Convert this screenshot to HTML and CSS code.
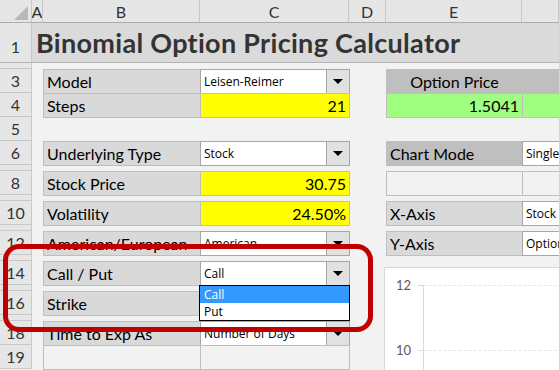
FILE: index.html
```html
<!DOCTYPE html>
<html lang="en">

<head>
  <meta charset="UTF-8" />
  <title>Binomial Option Pricing Calculator</title>
  <link rel="stylesheet" href="styles.css">
</head>

<body>
  <div class="sheet">
    <div class="row head">
      <div class="ch corner">
        <svg width="31" height="22" viewBox="0 0 31 22"><polygon points="14,20 28,20 28,6" fill="#b8b8b8" /></svg>
      </div>
      <div class="ch">A</div>
      <div class="ch">B</div>
      <div class="ch">C</div>
      <div class="ch">D</div>
      <div class="ch">E</div>
      <div class="ch"></div>
    </div>

    <div class="row title">
      <div class="rh">1</div>
      <div class="title-cell">Binomial Option Pricing Calculator</div>
    </div>
    <div class="row gap"><div class="rh"></div></div>

    <div class="row">
      <div class="rh">3</div><div></div>
      <div class="box label">Model</div>
      <div class="box combo"><span>Leisen-Reimer</span><i class="dd"></i></div>
      <div></div>
      <div class="box dark center">Option Price</div>
      <div class="box dark"></div>
    </div>
    <div class="row">
      <div class="rh">4</div><div></div>
      <div class="box label">Steps</div>
      <div class="box input">21</div>
      <div></div>
      <div class="box result">1.5041</div>
      <div class="box result"></div>
    </div>
    <div class="row">
      <div class="rh">5</div>
    </div>
    <div class="row">
      <div class="rh">6</div><div></div>
      <div class="box label">Underlying Type</div>
      <div class="box combo"><span>Stock</span><i class="dd"></i></div>
      <div></div>
      <div class="box dark">Chart Mode</div>
      <div class="box combo"><span>Single Variable</span></div>
    </div>
    <div class="row gap"><div class="rh"></div></div>

    <div class="row">
      <div class="rh">8</div><div></div>
      <div class="box label">Stock Price</div>
      <div class="box input">30.75</div>
      <div></div>
      <div class="box"></div>
      <div class="box"></div>
    </div>
    <div class="row gap"><div class="rh"></div></div>

    <div class="row">
      <div class="rh">10</div><div></div>
      <div class="box label">Volatility</div>
      <div class="box input">24.50%</div>
      <div></div>
      <div class="box label">X-Axis</div>
      <div class="box combo"><span>Stock Price</span></div>
    </div>
    <div class="row gap"><div class="rh"></div></div>

    <div class="row">
      <div class="rh">12</div><div></div>
      <div class="box label">American/European</div>
      <div class="box combo"><span>American</span><i class="dd"></i></div>
      <div></div>
      <div class="box label">Y-Axis</div>
      <div class="box combo"><span>Option Price</span></div>
    </div>
    <div class="row gap"><div class="rh"></div></div>

    <div class="row">
      <div class="rh">14</div><div></div>
      <div class="box label">Call / Put</div>
      <div class="box combo"><span>Call</span><i class="dd"></i></div>
    </div>
    <div class="row gap"><div class="rh"></div></div>

    <div class="row">
      <div class="rh">16</div><div></div>
      <div class="box label">Strike</div>
      <div class="box input">30.00</div>
    </div>
    <div class="row gap"><div class="rh"></div></div>

    <div class="row">
      <div class="rh">18</div><div></div>
      <div class="box label">Time to Exp As</div>
      <div class="box combo"><span>Number of Days</span><i class="dd"></i></div>
    </div>
    <div class="row">
      <div class="rh">19</div><div></div>
      <div class="box"></div>
      <div class="box"></div>
    </div>

    <!-- floating objects -->
    <div class="chart">
      <svg width="200" height="110" viewBox="0 0 200 110">
        <line x1="38.5" y1="17.5" x2="200" y2="17.5" stroke="#e4e4e4" stroke-dasharray="3 2" />
        <line x1="38.5" y1="82.5" x2="200" y2="82.5" stroke="#e4e4e4" stroke-dasharray="3 2" />
        <line x1="33" y1="17.5" x2="38.5" y2="17.5" stroke="#d9d9d9" />
        <line x1="33" y1="82.5" x2="38.5" y2="82.5" stroke="#d9d9d9" />
        <line x1="38.5" y1="17" x2="38.5" y2="110" stroke="#d9d9d9" />
        <text x="26" y="22" text-anchor="end" class="tick">12</text>
        <text x="26" y="87" text-anchor="end" class="tick">10</text>
      </svg>
    </div>

    <div class="list">
      <div class="opt sel">Call</div>
      <div class="opt">Put</div>
    </div>

    <div class="mark"></div>
  </div>
</body>

</html>
```

FILE: styles.css
```css
* {
  box-sizing: border-box;
  margin: 0;
  padding: 0;
}

body {
  background: #f2f2f2;
  font-family: Lato, 'Liberation Sans', sans-serif;
  font-size: 16px;
  color: #000;
  overflow: hidden;
}

.sheet {
  position: relative;
  width: 559px;
  height: 370px;
  overflow: hidden;
}

.row {
  display: grid;
  grid-template-columns: 32px 11px 157px 149px 37px 136px 1fr;
  height: 24px;
}

.row.head {
  height: 23px;
}

.row.title {
  height: 40px;
}

.row.gap {
  height: 6px;
}

/* headers */
.ch {
  background: #e6e6e6;
  border-right: 1px solid #c8c8c8;
  border-bottom: 1px solid #ababab;
  color: #333;
  display: flex;
  align-items: center;
  justify-content: center;
  overflow: hidden;
}

.ch.corner {
  align-items: flex-start;
  justify-content: flex-start;
}

.rh {
  background: #e6e6e6;
  border-right: 1px solid #c8c8c8;
  border-bottom: 1px solid #c8c8c8;
  color: #333;
  display: flex;
  align-items: center;
  justify-content: center;
}

.title .rh {
  align-items: flex-end;
  padding-bottom: 6px;
  border-bottom-color: #b4b4b4;
}

.title-cell {
  grid-column: 2 / -1;
  background: #dadada;
  border-bottom: 1px solid #b4b4b4;
  display: flex;
  align-items: flex-end;
  padding: 0 0 3px 4px;
  font-size: 27px;
  font-weight: 700;
  letter-spacing: 0.3px;
  color: #333;
  white-space: nowrap;
}

/* cells */
.box {
  border: 1px solid #bfbfbf;
  margin: 0 -1px -1px 0;
  display: flex;
  align-items: center;
  padding: 0 3px;
  white-space: nowrap;
  overflow: hidden;
}

.label {
  background: #d9d9d9;
}

.dark {
  background: #bfbfbf;
}

.center {
  justify-content: center;
}

.input {
  background: #ffff00;
  justify-content: flex-end;
}

.result {
  background: #a0ff80;
  justify-content: flex-end;
}

.combo {
  background: #fff;
  border-color: #a6a6a6;
  padding: 0 0 0 3px;
  font-family: 'Open Sans', 'Noto Sans', sans-serif;
  font-size: 12px;
}

.combo span {
  flex: 1;
}

.dd {
  width: 23px;
  align-self: stretch;
  background: #e1e1e1;
  border-left: 1px solid #a6a6a6;
  display: flex;
  align-items: center;
  justify-content: center;
}

.dd::after {
  content: "";
  border-style: solid;
  border-width: 5px 5px 0;
  border-color: #000 transparent transparent;
}

/* floating objects */
.chart {
  position: absolute;
  left: 384px;
  top: 267px;
  width: 200px;
  height: 110px;
  background: #fff;
  border: 1px solid #d9d9d9;
}

.chart svg {
  display: block;
}

.tick {
  font-family: Lato, sans-serif;
  font-size: 13px;
  fill: #595959;
}

.list {
  position: absolute;
  left: 199px;
  top: 285px;
  width: 151px;
  height: 36px;
  background: #fff;
  border: 1px solid #000;
  font-family: 'Open Sans', 'Noto Sans', sans-serif;
  font-size: 12px;
}

.opt {
  height: 17px;
  line-height: 17px;
  padding-left: 4px;
}

.opt.sel {
  background: #3399ff;
  color: #fff;
}

.mark {
  position: absolute;
  left: 3px;
  top: 244px;
  width: 370px;
  height: 88px;
  border: 5px solid #c00000;
  border-radius: 16px;
}
```
